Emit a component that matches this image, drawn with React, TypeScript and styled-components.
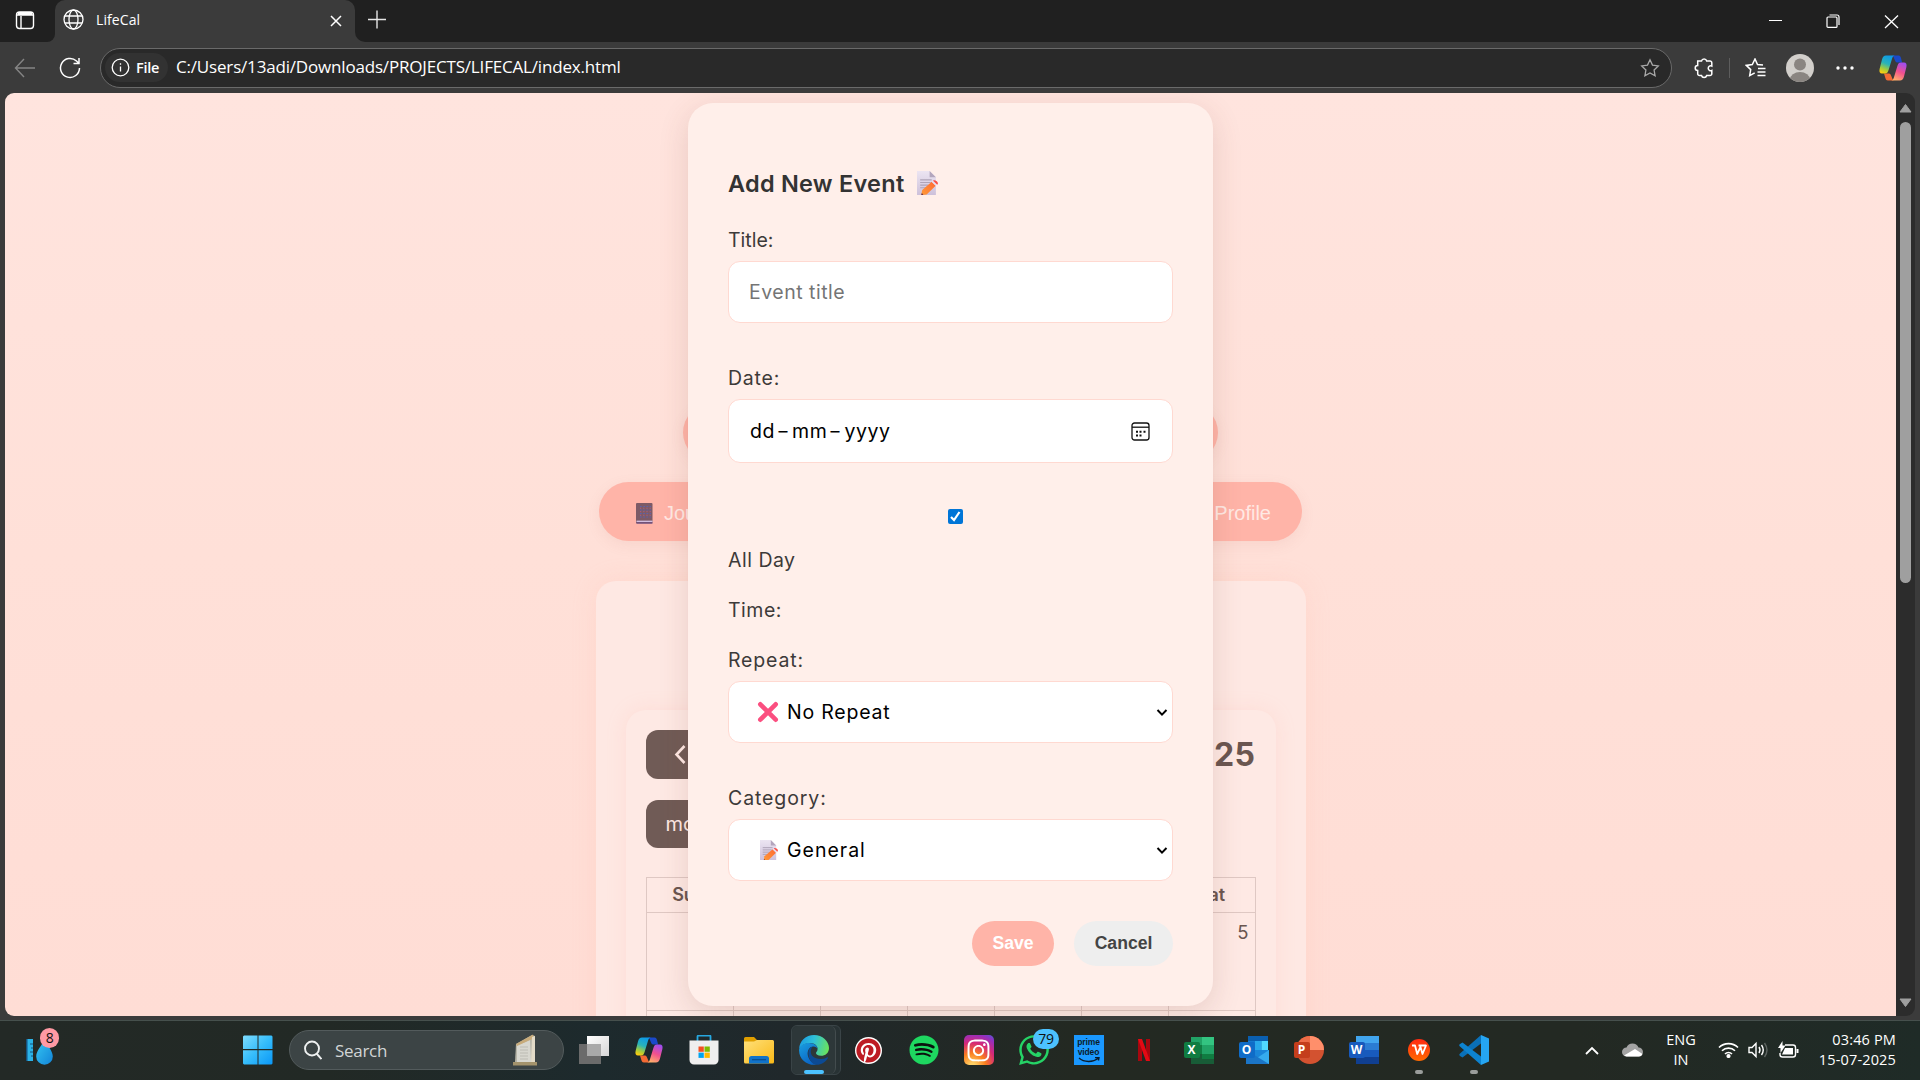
import React from 'react';
import styled, { createGlobalStyle } from 'styled-components';
import { FaPinterest, FaSpotify, FaInstagram, FaWhatsapp } from 'react-icons/fa6';

const ui = `"Open Sans", "Noto Sans", sans-serif`;
const page = `Inter, "Open Sans", sans-serif`;
const arial = `"Liberation Sans", sans-serif`;

const Global = createGlobalStyle`
  * { box-sizing: border-box; }
  body { margin: 0; overflow: hidden; background: #3b3b3b; }
  svg { display: block; flex: none; }
  button { font: inherit; border: 0; padding: 0; }
`;

const Desktop = styled.div`
  width: 1920px; height: 1080px; overflow: hidden; display: flex; flex-direction: column;
  background: #3b3b3b; font-family: ${ui}; color: #fff;
`;

/* ---------- browser chrome ---------- */
const TabStrip = styled.div`
  height: 42px; flex: none; display: flex; align-items: stretch; background: #202020;
`;
const SidebarSlot = styled.div`
  width: 55px; padding: 11px 0 0 15px; background: #202020; border-bottom-right-radius: 8px;
`;
const StripBase = styled.div`
  width: 355px; display: flex; background: #3b3b3b;
`;
const Tab = styled.div`
  width: 300px; display: flex; align-items: center; padding: 0 13px 3px 8px;
  background: #3b3b3b; border-radius: 10px 10px 0 0;
  box-shadow: 0 -20px 0 0 #202020;
`;
const TabTitle = styled.span`
  margin-left: 12px; flex: 1; font-size: 14px; letter-spacing: 0.1px;
`;
const StripRest = styled.div`
  flex: 1; display: flex; align-items: flex-start; background: #202020; border-bottom-left-radius: 10px;
  padding-left: 13px;
`;
const RestHolder = styled.div` flex: 1; display: flex; background: #3b3b3b; `;
const WindowButtons = styled.div`
  margin-left: auto; display: flex; gap: 44px; padding: 14px 21px 0 0;
`;
const Toolbar = styled.div`
  height: 51px; flex: none; display: flex; align-items: center; padding: 0 13px 0 14px;
`;
const Address = styled.div`
  width: 1573px; height: 40px; margin-left: 19px; border: 1px solid #6a6a6a; border-radius: 20px;
  background: #292929; display: flex; align-items: center; padding: 0 11px 0 4px;
`;
const Chip = styled.div`
  width: 63px; height: 29px; border-radius: 15px; background: #323232; display: flex; align-items: center;
  gap: 6px; padding-left: 6px; font-size: 14.5px; font-weight: 600; letter-spacing: -0.3px;
`;
const Url = styled.span`
  margin-left: 8px; flex: 1; font-size: 17px; letter-spacing: -0.18px; white-space: nowrap; padding-bottom: 2px;
`;
const ToolIcons = styled.div`
  display: flex; align-items: center; margin-left: 21px; height: 40px;
`;
const Divider = styled.i` width: 1px; height: 20px; background: #5d5d5d; margin: 0 15px 0 15px; `;
const View = styled.div`
  height: 923px; flex: none; display: flex; padding: 0 5px;
`;

/* ---------- web page ---------- */
const Page = styled.div`
  width: 1891px; height: 923px; position: relative; overflow: hidden; display: flex; flex-direction: column;
  align-items: center; padding-top: 310px; border-radius: 9px 0 0 9px;
  background: linear-gradient(#ffe4de, #ffe0d8 50%, #ffddd5); font-family: ${page};
`;
const PillRow = styled.div<{ $w: number }>`
  width: ${p => p.$w}px; display: flex; justify-content: space-between; flex: none; margin-bottom: 20px;
`;
const NavPill = styled.div<{ $w: number; $end?: boolean }>`
  width: ${p => p.$w}px; height: 59px; border-radius: 30px; background: #ffb4a8; color: #ffe9e4;
  display: flex; align-items: center; gap: 11px; padding: 3px 31px 0 37px; font-family: ${arial}; font-size: 20px;
  justify-content: ${p => (p.$end ? 'flex-end' : 'flex-start')}; box-shadow: 0 4px 14px rgba(190, 110, 95, 0.1);
`;
const Card = styled.div`
  width: 710px; height: 700px; flex: none; margin-top: 20px; padding: 129px 30px 0; border-radius: 20px;
  background: #fee8e3; box-shadow: 0 0 24px rgba(255, 180, 165, 0.2);
`;
const Calendar = styled.div`
  height: 700px; border-radius: 20px; padding: 20px; background: #fee9e4; color: #6a5650;
  box-shadow: 0 0 20px rgba(255, 170, 155, 0.18);
`;
const CalHead = styled.div` display: flex; justify-content: space-between; align-items: center; height: 49px; `;
const DarkButton = styled.div<{ $h: number; $w: number }>`
  height: ${p => p.$h}px; width: ${p => p.$w}px; border-radius: 12px; background: #705b56; color: #ffe9e4;
  display: flex; align-items: center; padding-left: 20px; padding-bottom: 1px; font-size: 20px;
`;
const CalTitle = styled.span` font-size: 32px; font-weight: 700; letter-spacing: 0.5px; `;
const Gap = styled.div<{ $h: number }>` height: ${p => p.$h}px; flex: none; `;
const Grid = styled.div`
  display: grid; grid-template-columns: repeat(7, 87px); grid-template-rows: 35px 98px 98px; width: 610px;
  border-top: 1px solid #dfc8c3; border-left: 1px solid #dfc8c3;
`;
const Cell = styled.div<{ $head?: boolean }>`
  border-right: 1px solid #dfc8c3; border-bottom: 1px solid #dfc8c3; display: flex;
  justify-content: ${p => (p.$head ? 'center' : 'flex-end')};
  font-weight: ${p => (p.$head ? 600 : 400)}; font-size: ${p => (p.$head ? 18 : 18.5)}px;
  line-height: ${p => (p.$head ? 33 : 38)}px; padding-right: ${p => (p.$head ? 1 : 6)}px;
`;

/* ---------- dialog ---------- */
const Modal = styled.div`
  position: absolute; left: 683px; top: 10px; width: 525px; height: 903px; padding: 60px 40px 40px;
  border-radius: 25px; background: #ffefea; color: #333; display: flex; flex-direction: column;
  box-shadow: 0 8px 30px rgba(120, 60, 50, 0.16);
`;
const Heading = styled.div`
  height: 40px; flex: none; display: flex; align-items: center; gap: 13px; font-size: 23.5px; font-weight: 600;
  margin-bottom: 22px; color: #333; letter-spacing: 0.25px;
`;
const Label = styled.div<{ $mb?: number; $ls?: number }>`
  height: 30px; flex: none; line-height: 30px; font-size: 19.5px; margin-bottom: ${p => p.$mb ?? 6}px;
  color: #3d3a39; letter-spacing: ${p => p.$ls ?? 0}px;
`;
const TextInput = styled.input`
  height: 62px; flex: none; width: 100%; border: 1px solid #ffd9d1; border-radius: 12px; background: #fff;
  padding: 0 20px; font: 19.5px ${page}; letter-spacing: 0.5px; outline: none; margin-bottom: 40px;
  &::placeholder { color: #757575; opacity: 1; }
`;
const Field = styled.div<{ $h: number; $mb: number; $pl: number; $pr: number }>`
  height: ${p => p.$h}px; flex: none; border: 1px solid #ffd9d1; border-radius: 12px; background: #fff; color: #000;
  padding: 0 ${p => p.$pr}px 0 ${p => p.$pl}px; margin-bottom: ${p => p.$mb}px; display: flex; align-items: center;
  justify-content: space-between; font-size: 19.5px;
`;
const FieldText = styled.span<{ $ls?: number; $ml?: number }>`
  margin-left: ${p => p.$ml ?? 0}px; margin-right: auto; letter-spacing: ${p => p.$ls ?? 0}px;
`;
const Dash = styled.span` display: inline-block; padding: 0 3.7px; transform: scaleX(1.45); `;
const CheckRow = styled.div`
  height: 15px; flex: none; padding-left: 220px; margin: 0 0 21px;
`;
const CheckBox = styled.div` width: 15px; height: 15px; border-radius: 2px; background: #0075d7; `;
const Actions = styled.div` display: flex; justify-content: flex-end; gap: 20px; height: 45px; `;
const Action = styled.button<{ $w: number; $primary?: boolean }>`
  width: ${p => p.$w}px; height: 45px; border-radius: 23px; font: bold 17.6px ${arial};
  background: ${p => (p.$primary ? '#ffb4a8' : '#eee')}; color: ${p => (p.$primary ? '#fff' : '#444')};
`;
const ScrollBar = styled.div`
  width: 19px; height: 923px; background: #2c2c2c; border-radius: 0 9px 9px 0; display: flex; flex-direction: column;
  align-items: center; padding: 10px 0 8px;
`;
const Thumb = styled.div` width: 11px; height: 461px; margin: 9px 0 auto; border-radius: 6px; background: #9f9f9f; `;

/* ---------- taskbar ---------- */
const TaskBar = styled.div`
  height: 60px; flex: none; margin-top: auto; display: flex; align-items: center; border-top: 1px solid #46504d;
  padding-bottom: 1px;
  background: linear-gradient(90deg, #232926 0%, #222925 17%, #1d2a2d 31%, #20282b 41%, #232922 56%, #232923 82%, #1f2b27 100%);
`;
const Widget = styled.div` position: relative; width: 56px; margin-left: 24px; height: 44px; `;
const Badge = styled.span<{ $x: number; $y: number; $w: number; $bg: string }>`
  position: absolute; left: ${p => p.$x}px; top: ${p => p.$y}px; width: ${p => p.$w}px; height: 20px; border-radius: 10px;
  background: ${p => p.$bg}; color: #111; font-size: 14px; line-height: 20px; text-align: center; letter-spacing: -0.3px;
`;
const Start = styled.div` margin-left: 163px; width: 46px; `;
const Search = styled.div`
  width: 275px; height: 40px; border-radius: 20px; background: #3c4445; border: 1px solid #535b5c; display: flex;
  align-items: center; padding: 0 25px 0 13px; color: #d2d5d5; font-size: 17px; letter-spacing: -0.3px;
`;
const SearchText = styled.span` flex: 1; margin-left: 13px; `;
const Apps = styled.div` display: flex; margin-left: 2px; `;
const Slot = styled.div` width: 55px; height: 58px; position: relative; display: flex; align-items: center; justify-content: center; `;
const ActiveStack = styled.div`
  width: 50px; height: 50px; border: 1px solid #3a4447; border-radius: 6px; background: #283234; padding-right: 6px;
  margin-left: 5px; flex: none;
`;
const ActiveTile = styled.div`
  width: 44px; height: 48px; border-right: 1px solid #434c4e; border-radius: 6px; background: #2d3739; display: flex;
  align-items: center; justify-content: center;
`;
const Running = styled.i<{ $w: number; $c: string }>`
  position: absolute; bottom: 5px; left: 50%; width: ${p => p.$w}px; height: 4px; margin-left: ${p => -p.$w / 2}px;
  border-radius: 2px; background: ${p => p.$c};
`;
const Tile = styled.div<{ $bg: string; $r: number; $s: number }>`
  width: ${p => p.$s}px; height: ${p => p.$s}px; border-radius: ${p => p.$r}px; background: ${p => p.$bg}; display: flex;
  flex-direction: column; align-items: center; justify-content: center;
`;
const PrimeText = styled.span`
  color: #0b1c2c; font: bold 8.5px/10px ${arial}; text-align: center; letter-spacing: -0.1px;
`;
const Office = styled.div` position: relative; width: 30px; height: 28px; `;
const OfficeLetter = styled.span<{ $bg: string }>`
  position: absolute; left: 0; top: 6px; width: 16px; height: 16px; border-radius: 2px; background: ${p => p.$bg};
  font: bold 12px/16px "Open Sans", sans-serif; text-align: center; color: #fff;
`;
const Tray = styled.div` margin-left: auto; display: flex; align-items: center; padding-right: 24px; height: 58px; `;
const TrayText = styled.div<{ $w: number; $align: string; $ml: number; $ls: number }>`
  width: ${p => p.$w}px; margin-left: ${p => p.$ml}px; text-align: ${p => p.$align}; font-size: 14.5px; line-height: 20px;
  letter-spacing: ${p => p.$ls}px; white-space: nowrap;
`;

const Memo = ({ w }: { w: number }) => (
  <svg width={w} height={w * 1.15} viewBox="0 0 20 23">
    <defs>
      <linearGradient id="sheet" x1="0" y1="0" x2="0" y2="1"><stop stopColor="#ece5f2" /><stop offset="1" stopColor="#cdc0da" /></linearGradient>
      <linearGradient id="pen" x1="1" y1="0" x2="0" y2="1"><stop stopColor="#ff6a35" /><stop offset="1" stopColor="#ff9a35" /></linearGradient>
    </defs>
    <path d="M0 0h12l6 6v17H0z" fill="url(#sheet)" />
    <path d="M12 0l6 6h-6z" fill="#b3a6bd" />
    <path d="M3 8.500h11M3 11h10M3 13.500h8M3 16h6" stroke="#afa4b8" strokeWidth="1.100" />
    <path d="M4 23l1-4.800L14 10.300l3.800 3.800-8.600 8.400z" fill="url(#pen)" />
    <path d="M14 10.300l1.300-1.200 3.800 3.800-1.300 1.200z" fill="#e9dff0" />
    <path d="M15.300 9.300c1.600-1.600 6.300 1.600 4 3.700z" fill="#fb4f45" />
    <path d="M4 23l.6-2 1.400 1.700z" fill="#5e2c50" />
  </svg>
);
const CopilotLogo = ({ s }: { s: number }) => (
  <svg width={s} height={s} viewBox="0 0 28 28">
    <defs>
      <linearGradient id="cpA" x1=".6" y1="0" x2=".25" y2="1"><stop stopColor="#0d9ae8" /><stop offset=".45" stopColor="#2ab3b8" /><stop offset=".75" stopColor="#a3cc3d" /><stop offset="1" stopColor="#ffcc0d" /></linearGradient>
      <linearGradient id="cpB" x1=".7" y1="0" x2=".3" y2="1"><stop stopColor="#a04df0" /><stop offset=".5" stopColor="#f2508d" /><stop offset="1" stopColor="#ffb06a" /></linearGradient>
    </defs>
    <path d="M13 1.500h6.500c1.800 0 2.200 1.400 2.600 3l1 4h-5c-2.500 0-3-7-5.100-7z" fill="#1b49c9" />
    <path d="M15 26.500H9c-2 0-2.400-1.500-2.800-3L5 19.500h5c2.500 0 3 7 5 7z" fill="#f36a34" />
    <path d="M7 1.500h9c-2 0-2.600 2-3.200 4L9.600 16c-.8 2.400-1.500 3.500-3.600 3.500H3c-2.200 0-3-1.700-2.400-4.500L3 5.500C3.700 3 4.900 1.500 7 1.500z" fill="url(#cpA)" />
    <path d="M21 26.500h-9c2 0 2.600-2 3.200-4L18.400 12c.8-2.400 1.500-3.500 3.600-3.500h3c2.200 0 3 1.700 2.400 4.500L25 22.500c-.7 2.500-1.900 4-4 4z" fill="url(#cpB)" />
  </svg>
);
const EdgeLogo = () => (
  <svg width="30" height="30" viewBox="0 0 30 30">
    <defs>
      <linearGradient id="edTop" x1="0" y1=".4" x2="1" y2=".6"><stop stopColor="#1b9de2" /><stop offset=".45" stopColor="#2fc1d8" /><stop offset="1" stopColor="#6be35a" /></linearGradient>
      <linearGradient id="edLeft" x1="0" y1="0" x2=".6" y2="1"><stop stopColor="#1a9fe0" /><stop offset="1" stopColor="#0a63c4" /></linearGradient>
    </defs>
    <path d="M15 0C23.500 0 30 6.300 30 13c0 5-3.700 7.800-8 7.800-3.500 0-5-1.500-5-2.700 0-1 1.600-1.700 1.600-4.300 0-3-3-5.800-7.400-5.800C5 8 1 12 .2 14 .2 6 7 0 15 0z" fill="url(#edTop)" />
    <path d="M.1 14.500C1 10.500 5.300 8 10 8c5 0 8.600 3 8.600 5.800-.5-1.300-2.200-2.300-4-2.300-4 0-6 3.500-6 7 0 5 4 9.500 9 11.200C8 31-.5 24 .1 14.500z" fill="url(#edLeft)" />
    <path d="M14.600 11.500c-4 1-5.500 12.500 7.400 12.500 3 0 5-.9 6.300-1.700.6-.4 1 .2.700.7-3 5-7.600 7.300-12.500 6.700C9 28 6 12 14.600 11.500z" fill="#0c4a94" />
  </svg>
);

const officeApps = [
  { l: 'X', bg: '#107c41', art: <><path d="M7 1h11v8H7z" fill="#21a366" /><path d="M18 1h12v8H18z" fill="#33c481" /><path d="M7 9h11v9H7z" fill="#107c41" /><path d="M18 9h12v9H18z" fill="#21a366" /><path d="M7 18h23v10H7z" fill="#185c37" /><path d="M18 18h12v5H18z" fill="#107c41" /></> },
  { l: 'O', bg: '#0f6cc8', art: <><path d="M9 0h20v14H9z" fill="#0a5fb0" /><path d="M9 5h7v9H9z" fill="#1579cf" /><path d="M16 5h6.500v9H16z" fill="#28a8ea" /><path d="M22.500 5H29v9h-6.500z" fill="#50d9ff" /><path d="M7 14h23v14H7z" fill="#1a85d8" /><path d="M30 14v14H9z" fill="#35abed" /><path d="M7 14l23 14H7z" fill="#1b75c7" /></> },
  { l: 'P', bg: '#c43e1c', art: <><circle cx="16" cy="14" r="14" fill="#d35230" /><path d="M16 0a14 14 0 0 1 14 14H16z" fill="#ff8f6b" /><path d="M16 0a14 14 0 0 0-14 14h14z" fill="#ed6c47" /></> },
  { l: 'W', bg: '#185abd', art: <><path d="M7 0h23v7H7z" fill="#41a5ee" /><path d="M7 7h23v7H7z" fill="#2b7cd3" /><path d="M7 14h23v7H7z" fill="#185abd" /><path d="M7 21h23v7H7z" fill="#103f91" /></> },
];

const Chevron = () => (
  <svg width="12" height="9" viewBox="0 0 12 9"><path d="M1.500 2l4.500 4.600L10.500 2" fill="none" stroke="#000" strokeWidth="2" /></svg>
);
const starPath = 'M10 1.800l2.500 5.300 5.800.8-4.200 4.100 1 5.800-5.100-2.800-5.100 2.800 1-5.800L1.700 7.900l5.800-.8z';

export default function App() {
  return (
    <Desktop>
      <Global />
      <TabStrip>
        <StripBase>
          <SidebarSlot>
            <svg width="20" height="19" viewBox="0 0 20 19" fill="none" stroke="#fff" strokeWidth="1.400"><rect x="1.500" y="1" width="17" height="16.500" rx="3" /><path d="M1.500 4h17M6 5v12" /><path d="M3 2.500h14" strokeWidth="3" /></svg>
          </SidebarSlot>
          <Tab>
            <svg width="21" height="21" viewBox="0 0 21 21" fill="none" stroke="#fff" strokeWidth="1.300"><circle cx="10.500" cy="10.500" r="9.500" /><ellipse cx="10.500" cy="10.500" rx="4.500" ry="9.500" /><path d="M2 7h17M2 14h17" /></svg>
            <TabTitle>LifeCal</TabTitle>
            <svg width="12" height="14" viewBox="0 0 12 14" stroke="#fff" strokeWidth="1.500"><path d="M1 3l10 10M11 3L1 13" /></svg>
          </Tab>
        </StripBase>
        <RestHolder>
          <StripRest>
            <svg width="18" height="40" viewBox="0 0 18 40" stroke="#e6e6e6" strokeWidth="1.400"><path d="M0 19.500h18M9 10.500v18" /></svg>
            <WindowButtons>
              <svg width="14" height="14" viewBox="0 0 14 14" stroke="#fff"><path d="M1 6.500h13" /></svg>
              <svg width="14" height="14" viewBox="0 0 14 14" stroke="#fff" fill="none" strokeWidth="1.200"><rect x="1" y="3" width="10" height="10.400" rx="1" /><path d="M3.500 1h7.500a2 2 0 0 1 2 2v8" /></svg>
              <svg width="15" height="15" viewBox="0 0 15 15" stroke="#fff" strokeWidth="1.300"><path d="M1 1.500l13 12.500M14 1.500L1 14" /></svg>
            </WindowButtons>
          </StripRest>
        </RestHolder>
      </TabStrip>

      <Toolbar>
        <svg width="22" height="20" viewBox="0 0 22 20" fill="none" stroke="#858585" strokeWidth="1.400"><path d="M21 10H1.500M10 1L1.500 10l8.500 9" /></svg>
        <svg width="22" height="22" viewBox="0 0 22 22" fill="none" stroke="#fff" strokeWidth="1.500" style={{ marginLeft: 23 }}><path d="M20.500 11a9.500 9.500 0 1 1-3-7l2 2M20 1v5.500h-5.500" /></svg>
        <Address>
          <Chip>
            <svg width="19" height="19" viewBox="0 0 19 19" fill="none" stroke="#fff" strokeWidth="1.300"><circle cx="9.500" cy="9.500" r="8.300" /><path d="M9.500 8.500v5M9.500 5.200v1.500" /></svg>
            File
          </Chip>
          <Url>C:/Users/13adi/Downloads/PROJECTS/LIFECAL/index.html</Url>
          <svg width="20" height="20" viewBox="0 0 20 20" fill="none" stroke="#a9a9a9" strokeWidth="1.300"><path d={starPath} /></svg>
        </Address>
        <ToolIcons>
          <svg width="21" height="22" viewBox="0 0 21 22" fill="none" stroke="#fff" strokeWidth="1.500"><path d="M5 4h3.500a2.700 2.700 0 0 1 5.200 0H17a1.800 1.800 0 0 1 1.800 1.800V9a2.500 2.500 0 1 0 0 4.500v3.200A1.800 1.800 0 0 1 17 18.500h-3.300a2.700 2.700 0 0 1-5.200 0H6.500a1.800 1.800 0 0 1-1.800-1.800v-3.300a2.500 2.500 0 0 1 0-5V4z" /></svg>
          <Divider />
          <svg width="21" height="20" viewBox="0 0 21 20" fill="none" stroke="#fff" strokeWidth="1.500"><path d="M18 7.500l-5.500-.5L10 1.500 7.300 7l-6 .9 4.400 4.200-1 6 5-2.700M13 11h7.500M12.500 14.500h8M12.500 18h8" transform="translate(0 -.5)" /></svg>
          <svg width="28" height="28" viewBox="0 0 28 28" style={{ marginLeft: 20 }}><defs><clipPath id="face"><circle cx="14" cy="14" r="14" /></clipPath></defs><g clipPath="url(#face)"><path d="M0 0h28v28H0z" fill="#d2cfcb" /><circle cx="14" cy="10.500" r="6" fill="#8a8581" /><ellipse cx="14" cy="25.500" rx="10" ry="7.500" fill="#8a8581" /></g></svg>
          <svg width="18" height="4" viewBox="0 0 18 4" fill="#fff" style={{ marginLeft: 22 }}><circle cx="2" cy="2" r="1.700" /><circle cx="9" cy="2" r="1.700" /><circle cx="16" cy="2" r="1.700" /></svg>
          <i style={{ marginLeft: 25 }}><CopilotLogo s={28} /></i>
        </ToolIcons>
      </Toolbar>

      <View>
        <Page>
          <PillRow $w={535}><NavPill $w={200} /><NavPill $w={200} /></PillRow>
          <PillRow $w={703}>
            <NavPill $w={170}>
              <svg width="17" height="21" viewBox="0 0 17 21"><rect width="16.500" height="20.500" rx="1" fill="#7d5a66" /><path d="M4 3.500h11M4 7h11M4 10.500h11M4 14h11" stroke="#5d62a8" strokeWidth="1.200" strokeDasharray="1.800 1.400" /><path d="M4 5.200h11M4 8.700h11M4 12.200h11" stroke="#b8607c" strokeWidth=".9" strokeDasharray="1.200 2" /><path d="M.5 18.300h16" stroke="#d9c4e6" strokeWidth="1.300" /><path d="M.5 20h16" stroke="#6a4a8a" /></svg>
              Journal
            </NavPill>
            <NavPill $w={170} $end>Profile</NavPill>
          </PillRow>
          <Card>
            <Calendar>
              <CalHead>
                <DarkButton $h={49} $w={100}>
                  <svg width="28" height="20" viewBox="0 0 28 20" fill="none" stroke="#ffe9e4" strokeWidth="2.600"><path d="M18.500 2L10.500 10.500l8 8.500" /></svg>
                </DarkButton>
                <CalTitle>2025</CalTitle>
              </CalHead>
              <Gap $h={21} />
              <DarkButton $h={48} $w={100}>mo</DarkButton>
              <Gap $h={29} />
              <Grid>
                {['Sun', '', '', '', '', '', 'Sat'].map((d, i) => <Cell key={i} $head>{d}</Cell>)}
                {['', '', '', '', '', '', '5'].map((d, i) => <Cell key={i}>{d}</Cell>)}
                {['', '', '', '', '', '', ''].map((d, i) => <Cell key={i}>{d}</Cell>)}
              </Grid>
            </Calendar>
          </Card>

          <Modal>
            <Heading><span>Add New Event</span><Memo w={21} /></Heading>
            <Label>Title:</Label>
            <TextInput placeholder="Event title" />
            <Label $ls={0.8}>Date:</Label>
            <Field $h={64} $mb={46} $pl={21} $pr={22}>
              <FieldText $ls={0.6}>dd<Dash>-</Dash>mm<Dash>-</Dash>yyyy</FieldText>
              <svg width="19" height="19" viewBox="0 0 19 19" fill="none" stroke="#111" strokeWidth="1.300"><rect x="1" y="1" width="17" height="17" rx="2.500" /><path d="M1 5.200h17" /><path d="M5 9.800h2M8.500 9.800h2M12.500 9.800h2M5 13.500h2M8.500 13.500h2" strokeWidth="2" /></svg>
            </Field>
            <CheckRow>
              <CheckBox><svg width="15" height="15" viewBox="0 0 15 15" fill="none" stroke="#fff" strokeWidth="2.200"><path d="M3 8l3 3 5.500-8" /></svg></CheckBox>
            </CheckRow>
            <Label $mb={20} $ls={0.5}>All Day</Label>
            <Label $mb={20} $ls={0.5}>Time:</Label>
            <Label $ls={0.85}>Repeat:</Label>
            <Field $h={62} $mb={40} $pl={28} $pr={4}>
              <svg width="22" height="22" viewBox="0 0 22 22" stroke="#fb4f80" strokeWidth="4.600" strokeLinecap="round"><path d="M3.300 3.300l15.400 15.400M18.700 3.300L3.300 18.700" /></svg>
              <FieldText $ml={8} $ls={0.8}>No Repeat</FieldText>
              <Chevron />
            </Field>
            <Label $ls={0.9}>Category:</Label>
            <Field $h={62} $mb={40} $pl={31} $pr={4}>
              <Memo w={18} />
              <FieldText $ml={9} $ls={1}>General</FieldText>
              <Chevron />
            </Field>
            <Actions><Action $w={82} $primary>Save</Action><Action $w={99}>Cancel</Action></Actions>
          </Modal>
        </Page>
        <ScrollBar>
          <svg width="13" height="10" viewBox="0 0 13 10"><path d="M6.500 1.500L12 9H1z" fill="#9f9f9f" stroke="#9f9f9f" strokeLinejoin="round" /></svg>
          <Thumb />
          <svg width="13" height="10" viewBox="0 0 13 10"><path d="M6.500 8.500L12 1H1z" fill="#9f9f9f" stroke="#9f9f9f" strokeLinejoin="round" /></svg>
        </ScrollBar>
      </View>

      <TaskBar>
        <Widget>
          <svg width="36" height="44" viewBox="0 0 36 44"><defs><linearGradient id="drop" x1="0" y1="0" x2="1" y2="1"><stop stopColor="#35c6f2" /><stop offset="1" stopColor="#1284d8" /></linearGradient></defs><path d="M3 11h6v22H3z" fill="#2bb3e8" /><path d="M2 11h1.500v22H2z" fill="#17527f" /><path d="M6 16h3M7 20h2M6 24h3M7 28h2" stroke="#17527f" /><path d="M20.500 11c2.500 6 8.300 11 8.300 17a8.300 8.300 0 0 1-16.600 0c0-6 5.800-11 8.300-17z" transform="translate(0 .5)" fill="url(#drop)" /></svg>
          <Badge $x={16} $y={0} $w={19} $bg="#ff99a4">8</Badge>
        </Widget>
        <Start>
          <svg width="30" height="30" viewBox="0 0 30 30"><defs><linearGradient id="win" x1="0" y1="0" x2="1" y2="1"><stop stopColor="#7fddff" /><stop offset=".5" stopColor="#36bdfb" /><stop offset="1" stopColor="#0a97f7" /></linearGradient></defs><path d="M1 .5h13.500V14H0V1.500zM15.500.5h13l1 1V14h-14zM0 15.300h14.500V29.500H1l-1-1zM15.500 15.300h14v13.200l-1 1h-13z" fill="url(#win)" /></svg>
        </Start>
        <Search>
          <svg width="19" height="20" viewBox="0 0 19 20" fill="none" stroke="#eef0f0" strokeWidth="1.900"><circle cx="9" cy="8.500" r="7" /><path d="M13.500 13.500l5 5.500" /></svg>
          <SearchText>Search</SearchText>
          <svg width="25" height="32" viewBox="0 0 25 32"><path d="M3 10L19 1l3 1-2 26H2z" fill="#b7b5a8" /><path d="M4 11.500L17 6l1 22H4z" fill="#d8d7cf" /><path d="M3 10L20 .5l1 4L17 6 4 12z" fill="#c8ab7a" /><path d="M19 3l3-1v26h-4z" fill="#e3dbc8" /><path d="M0 28h24v3.500H0z" fill="#a4936c" /><path d="M7 13h8M7 16h8M7 19h8M7 22h8M7 25h8" stroke="#bcbbb3" /></svg>
        </Search>
        <Apps>
          <Slot><svg width="30" height="28" viewBox="0 0 30 28"><defs><linearGradient id="tv" x1="0" y1="0" x2="1" y2="1"><stop stopColor="#fff" /><stop offset="1" stopColor="#d6d6d6" /></linearGradient></defs><path d="M8 0h22v20H8z" fill="url(#tv)" /><path d="M0 8h22v20H0z" fill="#6b6b6b" /><path d="M8 8h14v12H8z" fill="#a9a9a9" /></svg></Slot>
          <Slot><CopilotLogo s={28} /></Slot>
          <Slot><svg width="30" height="30" viewBox="0 0 30 30"><path d="M8.500 7V1.500a1 1 0 0 1 1-1h11a1 1 0 0 1 1 1V7" fill="none" stroke="#27a8e0" strokeWidth="1.800" /><path d="M.5 5.500h29V25a4.500 4.500 0 0 1-4.500 4.500H5A4.500 4.500 0 0 1 .500 25z" fill="#efefef" /><path d="M9.500 11.500h5.300v5.300H9.500z" fill="#f25022" /><path d="M15.500 11.500h5.300v5.300h-5.300z" fill="#7fba00" /><path d="M9.500 17.600h5.300v5.300H9.500z" fill="#00a4ef" /><path d="M15.500 17.600h5.300v5.300h-5.300z" fill="#ffb900" /></svg></Slot>
          <Slot><svg width="30" height="28" viewBox="0 0 30 28"><defs><linearGradient id="fold" x1="0" y1="0" x2="1" y2="1"><stop stopColor="#ffe07a" /><stop offset="1" stopColor="#f9b917" /></linearGradient></defs><path d="M0 2.500A1.500 1.500 0 0 1 1.500 1H10l3 3h16v6H0z" fill="#e09f00" /><path d="M0 5.500h10L13 4h15.500A1.500 1.500 0 0 1 30 5.500V26a1.500 1.500 0 0 1-1.500 1.500h-27A1.500 1.500 0 0 1 0 26z" fill="url(#fold)" /><path d="M5 27.500v-5A2.500 2.500 0 0 1 7.500 20h15a2.500 2.500 0 0 1 2.500 2.500v5z" fill="#1173c9" /><path d="M8 23.700h14" stroke="#0a4c8c" strokeWidth="1.200" /></svg></Slot>
          <Slot><ActiveStack><ActiveTile><EdgeLogo /></ActiveTile></ActiveStack><Running $w={20} $c="#4cc2ff" /></Slot>
          <Slot><Tile $bg="#fff" $r={14} $s={27}><FaPinterest size={25} color="#bd1c24" /></Tile></Slot>
          <Slot><Tile $bg="#0b120e" $r={15} $s={28}><FaSpotify size={30} color="#1ed760" /></Tile></Slot>
          <Slot><Tile $bg="radial-gradient(circle at 28% 105%, #ffd166 0 8%, #fa7e1e 35%, #d62976 62%, #962fbf 85%, #4f5bd5 100%)" $r={5} $s={30}><FaInstagram size={25} color="#fff" /></Tile></Slot>
          <Slot><FaWhatsapp size={34} color="#25d366" /><Badge $x={27} $y={8} $w={26} $bg="#4cc2ff">79</Badge></Slot>
          <Slot><Tile $bg="#1a98ff" $r={0} $s={30}><PrimeText>prime<br />video</PrimeText><svg width="22" height="6" viewBox="0 0 22 6" fill="none" stroke="#0b1c2c" strokeWidth="1.400"><path d="M1 1c5 4.500 14 4.500 19 .500M17 .500h4l-.500 3" /></svg></Tile></Slot>
          <Slot><svg width="12" height="22" viewBox="0 0 12 22"><path d="M0 0h4v22H0zM8 0h4v22H8z" fill="#a8070f" /><path d="M0 0h4l8 22H8z" fill="#e50914" /></svg></Slot>
          {officeApps.map(o => (
            <Slot key={o.l}><Office><svg width="30" height="28" viewBox="0 0 30 28">{o.art}</svg><OfficeLetter $bg={o.bg}>{o.l}</OfficeLetter></Office></Slot>
          ))}
          <Slot><svg width="22" height="22" viewBox="0 0 22 22"><defs><linearGradient id="wps" x1="0" y1="0" x2="0" y2="1"><stop stopColor="#ff2a12" /><stop offset="1" stopColor="#ff6a00" /></linearGradient></defs><circle cx="11" cy="11" r="11" fill="url(#wps)" /><path d="M4 6.500h3l2.200 8.500L12.500 8l2 7 3.500-8.500h-7.500" fill="none" stroke="#fff" strokeWidth="1.800" strokeLinejoin="round" /></svg><Running $w={8} $c="#9a9d9b" /></Slot>
          <Slot><svg width="30" height="30" viewBox="0 0 30 30"><path d="M22 0l8 3.500v23L22 30z" fill="#25a5f2" /><path d="M22 0v8.500L3.500 22.500 1 21q-1.500-1.200 0-2.500z" fill="#0a70b8" /><path d="M22 30v-8.500L3.500 7.500 1 9q-1.500 1.200 0 2.500z" fill="#0d83d0" /></svg><Running $w={8} $c="#9a9d9b" /></Slot>
        </Apps>
        <Tray>
          <svg width="14" height="9" viewBox="0 0 14 9" fill="none" stroke="#fff" strokeWidth="1.800"><path d="M1 8l6-6 6 6" /></svg>
          <svg width="21" height="14" viewBox="0 0 21 14" style={{ marginLeft: 23 }}><path d="M4.500 13.500a4.500 4.500 0 0 1 0-9A6.500 6.500 0 0 1 16.500 4.500a4.500 4.500 0 0 1 0 9z" fill="#a3a3a3" /><path d="M2 12.500L13 6l7.500 5a4 4 0 0 1-4 2.500H4.500z" fill="#fff" /></svg>
          <TrayText $w={40} $align="center" $ml={18} $ls={0}>ENG<br />IN</TrayText>
          <svg width="21" height="16" viewBox="0 0 21 16" fill="none" stroke="#fff" strokeWidth="1.600" style={{ marginLeft: 17 }}><path d="M1 5.500a13.500 13.500 0 0 1 19 0M4 8.800a9.200 9.200 0 0 1 13 0M7 12a5 5 0 0 1 7 0" /><circle cx="10.500" cy="14" r="1.300" fill="#fff" /></svg>
          <svg width="21" height="18" viewBox="0 0 21 18" fill="none" stroke="#fff" strokeWidth="1.400" style={{ marginLeft: 9 }}><path d="M1 6.500h3l4-4v13l-4-4H1z" /><path d="M11 6q2 3 0 6M13.500 4q3.500 5 0 10" /><path d="M16.500 2q5 7 0 14" stroke="#5d6461" /></svg>
          <svg width="21" height="18" viewBox="0 0 21 18" fill="none" stroke="#fff" strokeWidth="1.400" style={{ marginLeft: 9 }}><path d="M7 4h8a2.500 2.500 0 0 1 2.500 2.500v7A2.500 2.500 0 0 1 15 16H4.500A2.500 2.500 0 0 1 2 13.500V12" /><path d="M7 7h8v6.500H4z" fill="#fff" stroke="none" /><path d="M18.500 8h2v4h-2z" fill="#fff" stroke="none" /><path d="M4.500 0v4.500h3L2.500 12V7H0z" fill="#fff" stroke="none" /></svg>
          <TrayText $w={90} $align="right" $ml={7} $ls={0.15}>03:46 PM<br />15-07-2025</TrayText>
        </Tray>
      </TaskBar>
    </Desktop>
  );
}
